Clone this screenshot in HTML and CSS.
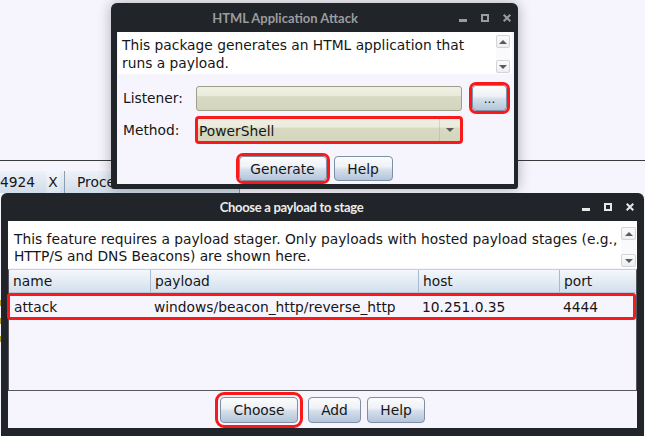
FILE: index.html
```html
<!DOCTYPE html>
<html lang="en">
<head>
<meta charset="utf-8">
<title>HTML Application Attack</title>
<link rel="stylesheet" href="styles.css">
</head>
<body>
<div class="desktop">
  <div class="app-top"></div>
  <div class="tabstrip">
    <div class="tab tab-first"><span class="tab-label">4924</span><span class="tab-close">X</span></div>
    <div class="tab tab-second"><span class="tab-label">Process Browser</span></div>
  </div>
  <div class="edge-marks"><i></i><i></i><i></i></div>
</div>

<section class="window win-html">
  <header class="titlebar inactive">
    <span class="title">HTML Application Attack</span>
    <span class="wbtns">
      <svg width="8" height="8" viewBox="0 0 8 8"><rect x="0" y="5.5" width="8" height="2"/></svg>
      <svg width="8" height="8" viewBox="0 0 8 8"><rect class="hollow" x="1" y="1" width="6" height="6" stroke-width="2"/></svg>
      <svg width="8" height="8" viewBox="0 0 8 8"><path class="hollow" d="M0.7 0.7L7.3 7.3M7.3 0.7L0.7 7.3" stroke-width="2"/></svg>
    </span>
  </header>
  <div class="content">
    <div class="textarea ta-small">
      <p class="ta-text">This package generates an HTML application that<br>runs a payload.</p>
      <div class="vscroll">
        <span class="sb-btn"><span class="tri-up"></span></span>
        <span class="sb-btn"><span class="tri-down"></span></span>
      </div>
    </div>
    <div class="form">
      <span class="label">Listener:</span>
      <div class="field"></div>
      <button class="btn btn-dots marked">...</button>
      <span class="label">Method:</span>
      <div class="field combo marked-inset"><span class="combo-text">PowerShell</span><span class="combo-arrow"><span class="tri-down"></span></span></div>
    </div>
    <div class="btnrow btnrow-html">
      <button class="btn btn-generate marked">Generate</button>
      <button class="btn btn-help1">Help</button>
    </div>
  </div>
</section>

<section class="window win-choose">
  <header class="titlebar active">
    <span class="title">Choose a payload to stage</span>
    <span class="wbtns">
      <svg width="8" height="8" viewBox="0 0 8 8"><rect x="0" y="5.5" width="8" height="2"/></svg>
      <svg width="8" height="8" viewBox="0 0 8 8"><rect class="hollow" x="1" y="1" width="6" height="6" stroke-width="2"/></svg>
      <svg width="8" height="8" viewBox="0 0 8 8"><path class="hollow" d="M0.7 0.7L7.3 7.3M7.3 0.7L0.7 7.3" stroke-width="2"/></svg>
    </span>
  </header>
  <div class="content">
    <div class="textarea ta-wide">
      <p class="ta-text">This feature requires a payload stager. Only payloads with hosted payload stages (e.g.,<br>HTTP/S and DNS Beacons) are shown here.</p>
      <div class="vscroll">
        <span class="sb-btn"><span class="tri-up"></span></span>
        <span class="sb-btn"><span class="tri-down"></span></span>
      </div>
    </div>
    <div class="table">
      <div class="trow thead">
        <span class="cell">name</span>
        <span class="cell">payload</span>
        <span class="cell">host</span>
        <span class="cell">port</span>
      </div>
      <div class="trow tbody-row">
        <span class="cell">attack</span>
        <span class="cell">windows/beacon_http/reverse_http</span>
        <span class="cell">10.251.0.35</span>
        <span class="cell">4444</span>
      </div>
    </div>
    <div class="btnrow btnrow-choose">
      <button class="btn btn-choose marked">Choose</button>
      <button class="btn btn-add">Add</button>
      <button class="btn btn-help2">Help</button>
    </div>
  </div>
</section>
</body>
</html>
```

FILE: styles.css
```css
* { box-sizing: border-box; }
html, body { margin: 0; padding: 0; }
body {
  width: 645px;
  height: 436px;
  overflow: hidden;
  position: relative;
  background: #f6f5fd;
  font-family: "DejaVu Sans", sans-serif;
  font-size: 13.8px;
  color: #161616;
}

/* background application */
.desktop { position: relative; }
.app-top { height: 161px; border-bottom: 1px solid #3b3b3b; }
.tabstrip {
  margin-top: 10px;
  height: 22px;
  width: 240px;
  display: flex;
  background: linear-gradient(#edf2f8, #d0dcea);
}
.tab {
  display: flex;
  align-items: center;
  height: 100%;
  border-right: 1px solid #8c9cb1;
  white-space: nowrap;
}
.tab-first { width: 65px; }
.tab-close {
  margin-left: 11px;
  padding: 0 2px;
  height: 100%;
  display: flex;
  align-items: center;
  background: linear-gradient(#f3f6fa, #dce5ef);
}
.tab-second { padding-left: 12px; flex: 1; }
.edge-marks {
  position: absolute;
  left: 0;
  top: 300px;
  width: 2px;
  display: flex;
  flex-direction: column;
  gap: 12px;
}
.edge-marks i { display: block; height: 6px; background: #b19a1c; }

/* windows */
.window {
  position: absolute;
  background: #212428;
  border-radius: 6px 6px 3px 3px;
  display: flex;
  flex-direction: column;
}
.win-html {
  left: 111px;
  top: 3px;
  width: 407px;
  height: 186px;
  box-shadow: 0 0 14px rgba(0, 0, 0, 0.3);
  z-index: 1;
}
.win-choose {
  left: 1px;
  top: 193px;
  width: 643px;
  height: 246px;
  z-index: 2;
}
.titlebar {
  flex: none;
  display: flex;
  align-items: center;
}
.win-html .titlebar { height: 29px; padding-right: 7px; }
.win-choose .titlebar { height: 28px; padding-right: 10px; }
.title {
  flex: 1;
  text-align: center;
  font-family: "Lato", sans-serif;
  font-weight: bold;
  font-size: 13px;
}
.inactive .title { color: #9b9c9e; }
.active .title { color: #ececec; letter-spacing: -0.3px; }
.wbtns { display: flex; gap: 14px; align-items: center; }
.wbtns svg { display: block; }
.inactive .wbtns svg { fill: #9b9c9e; stroke: #9b9c9e; }
.active .wbtns svg { fill: #e8e8e8; stroke: #e8e8e8; }
.wbtns .hollow { fill: none; }

.content { flex: 1; background: #f6f5fd; display: flex; flex-direction: column; }
.win-html .content { margin: 0 4px 5px 6px; }
.win-choose .content { margin: 0 7px 11px 7px; }

/* text areas */
.textarea { background: #fff; display: flex; flex: none; }
.ta-text { margin: 0; flex: 1; white-space: nowrap; }
.ta-small { height: 42px; margin: 0 2px 0 1px; }
.ta-small .ta-text { padding: 4px 0 0 4px; line-height: 18px; }
.ta-wide { height: 47px; }
.ta-wide .ta-text { padding: 10px 0 0 6px; line-height: 17px; }

.vscroll {
  width: 14px;
  display: flex;
  flex-direction: column;
  justify-content: space-between;
  background: #fafafc;
}
.ta-small .vscroll { margin: 3px 2px 1px 0; }
.ta-wide .vscroll { margin: 6px 1px 1px 0; width: 15px; }
.sb-btn {
  height: 13px;
  border: 1px solid #d3d3d8;
  border-radius: 2px;
  background: linear-gradient(#fbfbfc, #eeeef1);
  display: flex;
  align-items: center;
  justify-content: center;
}
.tri-up, .tri-down { width: 0; height: 0; border-left: 4px solid transparent; border-right: 4px solid transparent; }
.tri-up { border-bottom: 4px solid #5a5a5e; }
.tri-down { border-top: 4px solid #5a5a5e; }

/* form */
.form {
  display: grid;
  grid-template-columns: 63px 266px 35px;
  column-gap: 10px;
  row-gap: 6px;
  align-items: center;
  padding-left: 6px;
  margin-top: 11px;
}
.label { line-height: 16px; }
.field {
  height: 25px;
  border: 1px solid #9c9e8c;
  border-radius: 3px;
  background: linear-gradient(#f0f0e4 0%, #eaebdc 38%, #d8dac3 42%, #d3d5bc 100%);
}
.combo {
  height: 26px;
  display: flex;
  align-items: center;
}
.combo-text { flex: 1; padding-left: 2px; padding-top: 1px; }
.combo-arrow {
  width: 20px;
  height: 100%;
  display: flex;
  align-items: center;
  justify-content: center;
  border-left: 1px solid rgba(160, 162, 140, 0.35);
  margin-right: 2px;
}

.btn {
  font-family: "DejaVu Sans", sans-serif;
  font-size: 13.8px;
  color: #161616;
  height: 25px;
  padding: 0;
  border: 1px solid #7f8fa6;
  border-radius: 4px;
  background: linear-gradient(#fbfcfd 0%, #eef1f6 42%, #d4deeb 55%, #b3c5da 100%);
  display: flex;
  align-items: center;
  justify-content: center;
}
.btn-dots { height: 26px; font-size: 12px; padding-bottom: 4px; align-items: flex-end; }
.marked { outline: 3px solid #f81a1a; outline-offset: 0; }
.marked-inset { outline: 3px solid #f81a1a; outline-offset: -2px; border-radius: 3px; }

.btnrow { display: flex; justify-content: center; align-items: center; }
.btnrow-html { margin-top: 13px; gap: 7px; }
.btn-generate { width: 88px; }
.btn-help1 { width: 59px; }

/* table */
.table {
  flex: 1;
  margin-top: 1px;
  border: 1px solid #55575c;
  border-top-color: #c9ccd6;
  display: flex;
  flex-direction: column;
}
.trow {
  display: grid;
  grid-template-columns: 141px 268px 141px 1fr;
  align-items: center;
  white-space: nowrap;
}
.thead {
  height: 23px;
  background: linear-gradient(#f4f7fb, #d3e0ee);
  border-bottom: 1px solid #b9c6d6;
}
.thead .cell { height: 100%; display: flex; align-items: center; padding-left: 4px; border-left: 1px solid #a9bacd; }
.thead .cell:first-child { border-left: none; }
.tbody-row {
  height: 27px;
  border: 3px solid #f81a1a;
  border-radius: 3px;
  margin-left: -2px;
}
.tbody-row .cell { padding-left: 3px; }
.tbody-row .cell:first-child { padding-left: 4px; }

.btnrow-choose { height: 37px; flex: none; }
.btnrow-choose .btn { height: 26px; }
.btn-choose { width: 78px; outline-offset: 2px; }
.btn-add { width: 53px; margin-left: 10px; }
.btn-help2 { width: 58px; margin-left: 6px; }
```
